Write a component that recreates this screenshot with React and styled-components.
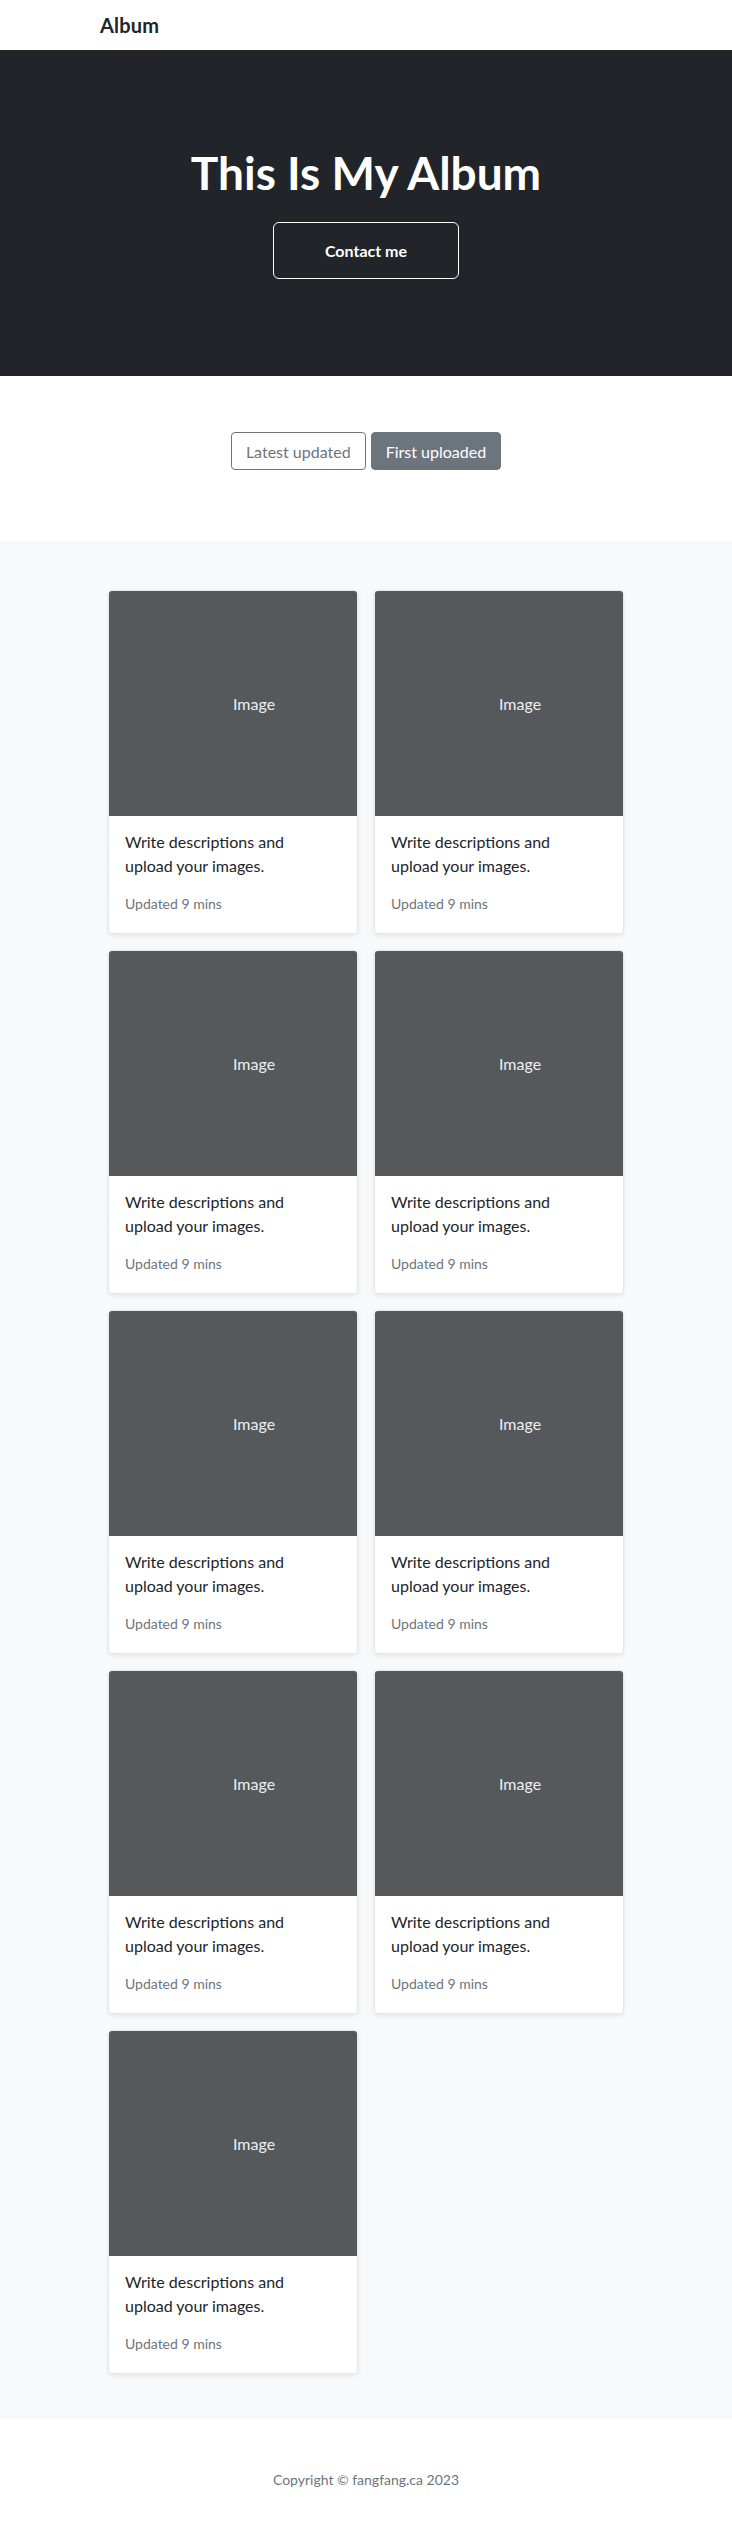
import React from 'react';
import styled, { createGlobalStyle } from 'styled-components';

const GlobalStyle = createGlobalStyle`
  body {
    margin: 0;
    font-family: Lato, "Open Sans", "Liberation Sans", sans-serif;
    color: #212529;
    background: #fff;
  }
  * { box-sizing: border-box; }
`;

const Navbar = styled.header`
  height: 50px;
  display: flex;
  align-items: center;
  padding-left: 100px;
  background: #fff;
`;

const Brand = styled.a`
  font-size: 20px;
  font-weight: 700;
  color: #212529;
  text-decoration: none;
  letter-spacing: 0.2px;
`;

const Hero = styled.section`
  height: 326px;
  background: #212529;
  display: flex;
  flex-direction: column;
  align-items: center;
  padding-top: 95px;
`;

const Title = styled.h1`
  margin: 0 0 21px;
  font-size: 46px;
  line-height: 56px;
  font-weight: 700;
  color: #fff;
`;

const ContactButton = styled.button`
  width: 186px;
  height: 57px;
  background: transparent;
  border: 1px solid #fff;
  border-radius: 6px;
  color: #fff;
  font-family: inherit;
  font-size: 16px;
  font-weight: 700;
`;

const SortBar = styled.section`
  display: flex;
  justify-content: center;
  gap: 5px;
  padding: 56px 0 71px;
`;

const SortButton = styled.button`
  height: 38px;
  padding: 0 14px;
  border-radius: 4px;
  border: 1px solid #6c757d;
  background: ${p => (p.$active ? '#6c757d' : '#fff')};
  color: ${p => (p.$active ? '#fff' : '#6c757d')};
  font-family: inherit;
  font-size: 16px;
`;

const AlbumSection = styled.section`
  background: #f8f9fa;
  padding: 49px 0 45px;
`;

const Grid = styled.div`
  width: 516px;
  margin: 0 auto;
  display: grid;
  grid-template-columns: 250px 250px;
  column-gap: 16px;
  row-gap: 16px;
`;

const Card = styled.div`
  background: #fff;
  border: 1px solid #e6e8ea;
  border-radius: 4px;
  overflow: hidden;
  box-shadow: 0 2px 4px rgba(0, 0, 0, 0.075);
`;

const Thumb = styled.div`
  height: 225px;
  background: #55595c;
  color: #eceeef;
  font-size: 16px;
  padding: 0 0 0 124px;
  display: flex;
  align-items: center;
`;

const CardBody = styled.div`
  padding: 14px 16px 19px;
`;

const CardText = styled.p`
  margin: 0 0 15px;
  font-size: 16px;
  line-height: 24px;
  padding-right: 30px;
`;

const Muted = styled.small`
  display: block;
  font-size: 14px;
  line-height: 21px;
  color: #6c757d;
`;

const Footer = styled.footer`
  height: 120px;
  display: flex;
  align-items: center;
  justify-content: center;
  color: #6c757d;
  font-size: 14px;
`;

const cards = Array.from({ length: 9 }, (_, i) => i);

export default function App() {
  return (
    <>
      <GlobalStyle />
      <Navbar>
        <Brand href="#">Album</Brand>
      </Navbar>
      <Hero>
        <Title>This Is My Album</Title>
        <ContactButton>Contact me</ContactButton>
      </Hero>
      <SortBar>
        <SortButton>Latest updated</SortButton>
        <SortButton $active>First uploaded</SortButton>
      </SortBar>
      <AlbumSection>
        <Grid>
          {cards.map(i => (
            <Card key={i}>
              <Thumb>Image</Thumb>
              <CardBody>
                <CardText>Write descriptions and upload your images.</CardText>
                <Muted>Updated 9 mins</Muted>
              </CardBody>
            </Card>
          ))}
        </Grid>
      </AlbumSection>
      <Footer>Copyright © fangfang.ca 2023</Footer>
    </>
  );
}
